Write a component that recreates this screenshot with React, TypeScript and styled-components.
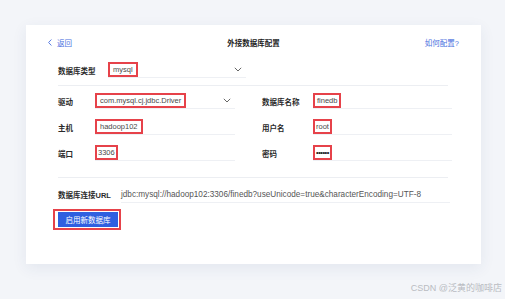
import React from 'react'
import styled, { createGlobalStyle } from 'styled-components'

const GlobalStyle = createGlobalStyle`
  html, body {
    margin: 0;
    padding: 0;
    background: #f3f5f9;
    font-family: "Liberation Sans", "Noto Sans CJK SC", sans-serif;
  }
`

const Page = styled.div`
  width: 505px;
  height: 299px;
  padding: 25px 0 0 26px;
  box-sizing: border-box;
  background: #f3f5f9;
`

const Card = styled.div`
  width: 455px;
  height: 239px;
  background: #fff;
  box-shadow: 0 4px 14px rgba(40, 60, 120, 0.08);
  padding-top: 8px;
  box-sizing: border-box;
`

const Header = styled.div`
  height: 18px;
  padding: 0 22px;
  display: flex;
  align-items: center;
  justify-content: space-between;
  font-size: 7.5px;
`

const Link = styled.span`
  color: #4a70e0;
  display: flex;
  align-items: center;
  gap: 5px;
  width: 40px;
  &:last-child {
    justify-content: flex-end;
  }
`

const Title = styled.span`
  color: #222;
  font-weight: bold;
`

const Form = styled.div`
  padding: 0 31px 0 32px;
  font-size: 7.5px;
`

const Row = styled.div<{ $label: number; $field: number; $top: number; $h?: number }>`
  display: grid;
  grid-template-columns: ${(p) => p.$label}px ${(p) => p.$field}px;
  height: ${(p) => p.$h || 16}px;
  margin-top: ${(p) => p.$top}px;
  align-items: stretch;
`

const Grid = styled.div`
  display: grid;
  grid-template-columns: 37px 140px 27px 51px 139px;
  grid-auto-rows: 16px;
  row-gap: 10px;
  margin-top: 7px;
`

const Label = styled.span`
  display: flex;
  align-items: center;
  color: #2a2a2a;
  font-weight: bold;
  white-space: nowrap;
`

const Field = styled.div<{ $size?: number }>`
  display: flex;
  align-items: center;
  justify-content: space-between;
  border-bottom: 1px solid #eef0f4;
  color: #555;
  white-space: nowrap;
  min-width: 0;
  font-size: ${(p) => p.$size || 7.5}px;
`

const Mark = styled.span<{ $pad?: string }>`
  border: 2px solid #e6424a;
  padding: ${(p) => p.$pad || '1px 2px'};
  line-height: 9px;
  color: #4a4a4a;
`

const Divider = styled.div<{ $top: number }>`
  height: 1px;
  background: #eceef2;
  margin-top: ${(p) => p.$top}px;
  margin-right: 2px;
`

const Chevron = styled.svg`
  width: 8px;
  height: 5px;
  margin-right: 4px;
  flex: none;
`

const Dots = styled.span`
  letter-spacing: -0.5px;
  color: #222;
  font-weight: bold;
`

const ButtonWrap = styled.div`
  display: inline-flex;
  margin: 6px 0 0 -5px;
  border: 2px solid #e6424a;
  padding: 1px 1px 1px 3px;
`

const Button = styled.button`
  width: 60px;
  height: 15px;
  border: none;
  background: #2f5fe0;
  color: #fff;
  font-family: inherit;
  font-size: 7.5px;
  padding: 0;
`

const Watermark = styled.div`
  text-align: right;
  padding-right: 3px;
  margin-top: 17px;
  font-size: 9px;
  color: #b9bcc2;
`

const Down = () => (
  <Chevron viewBox="0 0 8 5">
    <path d="M0.8 0.8 L4 4 L7.2 0.8" fill="none" stroke="#555" strokeWidth="0.9" />
  </Chevron>
)

const App = () => {
  return (
    <>
      <GlobalStyle />
      <Page>
        <Card>
          <Header>
            <Link>
              <svg width="4" height="7" viewBox="0 0 4 7">
                <path d="M3.4 0.5 L0.6 3.5 L3.4 6.5" fill="none" stroke="#4a70e0" strokeWidth="0.9" />
              </svg>
              返回
            </Link>
            <Title>外接数据库配置</Title>
            <Link>如何配置?</Link>
          </Header>
          <Form>
            <Row $label={50} $field={138} $top={11}>
              <Label>数据库类型</Label>
              <Field>
                <Mark $pad="1px 3px">mysql</Mark>
                <Down />
              </Field>
            </Row>
            <Divider $top={7} />
            <Grid>
              <Label>驱动</Label>
              <Field>
                <Mark $pad="1px 3px">com.mysql.cj.jdbc.Driver</Mark>
                <Down />
              </Field>
              <span />
              <Label>数据库名称</Label>
              <Field>
                <Mark>finedb</Mark>
              </Field>

              <Label>主机</Label>
              <Field>
                <Mark $pad="1px 3px">hadoop102</Mark>
              </Field>
              <span />
              <Label>用户名</Label>
              <Field>
                <Mark $pad="1px 1px">root</Mark>
              </Field>

              <Label>端口</Label>
              <Field>
                <Mark $pad="1px 1px">3306</Mark>
              </Field>
              <span />
              <Label>密码</Label>
              <Field>
                <Mark $pad="1px 1px">
                  <Dots>••••••</Dots>
                </Mark>
              </Field>
            </Grid>
            <Divider $top={16} />
            <Row $label={63} $field={329} $top={8} $h={17}>
              <Label>数据库连接URL</Label>
              <Field $size={8.2}>jdbc:mysql://hadoop102:3306/finedb?useUnicode=true&amp;characterEncoding=UTF-8</Field>
            </Row>
            <ButtonWrap>
              <Button>启用新数据库</Button>
            </ButtonWrap>
          </Form>
        </Card>
        <Watermark>CSDN @泛黄的咖啡店</Watermark>
      </Page>
    </>
  )
}

export default App
